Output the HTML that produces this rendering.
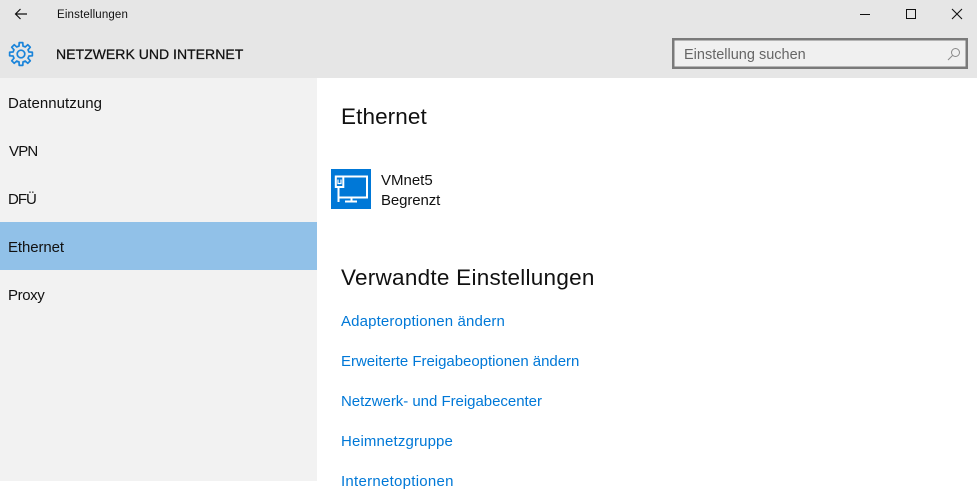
<!DOCTYPE html>
<html lang="de">
<head>
<meta charset="utf-8">
<title>Einstellungen</title>
<style>
html,body{margin:0;padding:0;width:977px;height:481px;overflow:hidden;background:#fff;font-family:"Liberation Sans",sans-serif;color:#111}
.a{position:absolute;white-space:nowrap;line-height:20px}
.nav{font-size:15px;left:8px}
.link{font-size:15px;left:341px;color:#0078d7}
svg{position:absolute;overflow:visible}
</style>
</head>
<body>
<div class="a" style="left:0;top:0;width:977px;height:78px;background:#e6e6e6"></div>
<div class="a" style="left:0;top:78px;width:317px;height:403px;background:#f2f2f2"></div>
<div class="a" style="left:0;top:222px;width:317px;height:48px;background:#91c1e8"></div>

<svg style="left:14px;top:8px" width="14" height="12" viewBox="0 0 14 12"><path d="M13 6H1.500M6.500 1L1.500 6l5 5" fill="none" stroke="#111" stroke-width="1.200"/></svg>
<div class="a" style="left:57px;top:5px;font-size:11.500px;letter-spacing:.15px">Einstellungen</div>

<svg style="left:860px;top:14px" width="10" height="1"><rect width="10" height="1" fill="#111"/></svg>
<svg style="left:906px;top:9px" width="10" height="10"><rect x=".5" y=".5" width="9" height="9" fill="none" stroke="#111"/></svg>
<svg style="left:952px;top:9px" width="10" height="10"><path d="M0 0L10 10M10 0L0 10" stroke="#111" stroke-width="1.100"/></svg>

<svg style="left:9px;top:42px" width="24" height="24" viewBox="-12 -12 24 24" fill="none" stroke="#1a84da" stroke-width="1.700"><path stroke-linejoin="round" d="M-1.980 -7.960L-1.800 -11.360L1.800 -11.360L1.980 -7.960L4.220 -7.030L6.760 -9.300L9.300 -6.760L7.030 -4.220L7.960 -1.980L11.360 -1.800L11.360 1.800L7.960 1.980L7.030 4.220L9.300 6.760L6.760 9.300L4.220 7.030L1.980 7.960L1.800 11.360L-1.800 11.360L-1.980 7.960L-4.220 7.030L-6.760 9.300L-9.300 6.760L-7.030 4.220L-7.960 1.980L-11.360 1.800L-11.360 -1.800L-7.960 -1.980L-7.030 -4.220L-9.300 -6.760L-6.760 -9.300L-4.220 -7.030Z"/><circle r="3.800"/></svg>
<div class="a" style="left:56px;top:44px;font-size:14.050px;-webkit-text-stroke:.25px #111">NETZWERK UND INTERNET</div>

<div class="a" style="left:672px;top:38px;width:296px;height:31px;background:#f0f0f0;box-shadow:inset 0 0 0 2.500px #7a7a7a"></div>
<div class="a" style="left:684px;top:45px;font-size:14.500px;color:#666">Einstellung suchen</div>
<svg style="left:947px;top:47px" width="14" height="14" viewBox="0 0 14 14" fill="none" stroke="#8a8a8a"><circle cx="8.500" cy="5.500" r="4"/><path d="M5.500 8.500L1 13"/></svg>

<div class="a nav" style="top:94px;letter-spacing:.05px">Datennutzung</div>
<div class="a nav" style="top:142px;left:9px;letter-spacing:-.8px">VPN</div>
<div class="a nav" style="top:190px;letter-spacing:-1px">DFÜ</div>
<div class="a nav" style="top:238px;letter-spacing:-.1px">Ethernet</div>
<div class="a nav" style="top:286px;letter-spacing:-.4px">Proxy</div>

<div class="a" style="left:341px;top:104px;line-height:26px;font-size:22.500px;letter-spacing:.1px">Ethernet</div>

<div class="a" style="left:331px;top:169px;width:40px;height:40px;background:#0078d7"></div>
<svg style="left:331px;top:169px" width="40" height="40" viewBox="0 0 40 40" fill="none" stroke="#fff" stroke-width="2"><path d="M12 7.500H36V28.500H7.500M7.500 18V33"/><path d="M20.500 28.500V32M14 32.500H26"/><rect x="4.800" y="7.500" width="7.500" height="10.500"/><path d="M7 10.500V14.500H10V10.500" stroke-width="1.200"/></svg>

<div class="a" style="left:381px;top:171px;font-size:15px">VMnet5</div>
<div class="a" style="left:381px;top:191px;font-size:15px;letter-spacing:-.1px">Begrenzt</div>

<div class="a" style="left:341px;top:265px;line-height:26px;font-size:22.500px;letter-spacing:.26px">Verwandte Einstellungen</div>

<div class="a link" style="top:312px;letter-spacing:.14px">Adapteroptionen ändern</div>
<div class="a link" style="top:352px;letter-spacing:-.03px">Erweiterte Freigabeoptionen ändern</div>
<div class="a link" style="top:392px;letter-spacing:-.03px">Netzwerk- und Freigabecenter</div>
<div class="a link" style="top:432px;letter-spacing:.14px">Heimnetzgruppe</div>
<div class="a link" style="top:472px;letter-spacing:.27px">Internetoptionen</div>
</body>
</html>
